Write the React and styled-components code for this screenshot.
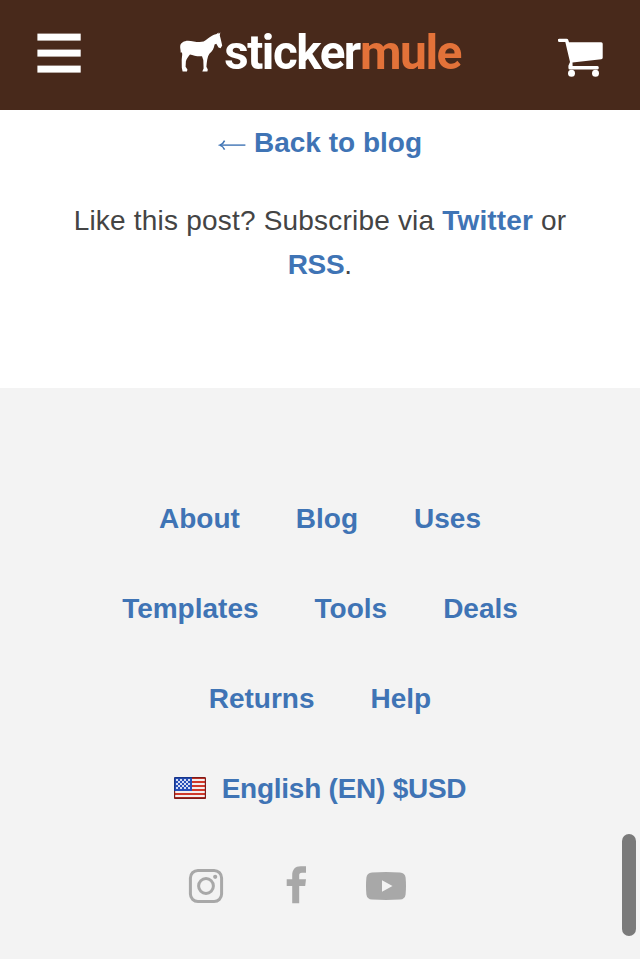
import React from "react";
import styled, { createGlobalStyle } from "styled-components";

const GlobalStyle = createGlobalStyle`
  *, *::before, *::after { box-sizing: border-box; }
  body { margin: 0; background: #fff; }
`;

const Page = styled.div`
  position: relative;
  display: flex;
  flex-direction: column;
  width: 640px;
  height: 959px;
  overflow: hidden;
  font-family: "Liberation Sans", Helvetica, Arial, sans-serif;
  font-size: 28px;
  line-height: 44px;
  color: #444;
`;

const Header = styled.header`
  display: flex;
  align-items: flex-start;
  justify-content: space-between;
  height: 110px;
  padding: 33px 36px 0 37px;
  background: #48291b;
`;

const MenuButton = styled.button`
  display: block;
  padding: 0;
  border: 0;
  background: none;
  line-height: 0;
`;

const LogoLink = styled.a`
  display: block;
  margin: -13px 0 0;
  line-height: 0;
`;

const LogoWord = styled.text`
  font-family: Roboto, sans-serif;
  font-size: 49px;
  font-weight: 700;
  letter-spacing: -1.5px;
  fill: ${({ $accent }) => ($accent ? "#e37239" : "#fff")};
`;

const CartLink = styled.a`
  display: block;
  line-height: 0;
  margin-top: 5px;
`;

const Article = styled.main`
  display: flex;
  flex-direction: column;
  align-items: center;
  height: 278px;
  padding-top: 11px;
  text-align: center;
`;

const TextLink = styled.a`
  color: #3f74b5;
  font-weight: 700;
  text-decoration: none;
  white-space: nowrap;
  letter-spacing: ${({ $spacing = 0 }) => $spacing}px;
`;

const BackLink = styled(TextLink)`
  display: flex;
  align-items: center;
  gap: 8px;
`;

const Subscribe = styled.p`
  margin: 34px 0 0;
  width: 520px;
  letter-spacing: 0.2px;
`;

const Footer = styled.footer`
  flex: 1;
  display: flex;
  flex-direction: column;
  align-items: center;
  padding-top: 109px;
  background: #f3f3f3;
`;

const LinkRow = styled.nav`
  display: flex;
  justify-content: center;
  gap: 56px;
  height: 44px;
  margin-bottom: 46px;
`;

const Locale = styled(TextLink)`
  display: flex;
  align-items: center;
  gap: 16px;
  height: 44px;

  svg { margin-bottom: 2px; }
`;

const SocialRow = styled.div`
  display: flex;
  gap: 50px;
  margin: 55px 48px 0 0;
`;

const SocialLink = styled.a`
  width: 40px;
  height: 40px;
  color: #a8a8a8;
  line-height: 0;
`;

const ScrollThumb = styled.div`
  position: absolute;
  right: 4px;
  top: 834px;
  width: 14px;
  height: 102px;
  border-radius: 7px;
  background: #7a7a7a;
`;

const MenuIcon = () => (
  <svg width="44" height="40" viewBox="0 0 44 40" fill="#fff">
    <rect x="0.4" y="0.6" width="43.3" height="7" />
    <rect x="0.4" y="16.6" width="43.3" height="7" />
    <rect x="0.4" y="32.6" width="43.3" height="7" />
  </svg>
);

const Logo = () => (
  <svg width="284" height="64" viewBox="178 20 284 64">
    <path
      fill="#fff"
      d="M180.2 46C180.6 42.6 184 40.8 188 40.7C193 40.8 198 43 203.6 41.6C206.5 40.4 208.5 37.4 212 35.8C214 34.8 215.6 34.4 217 33.8L218.3 32.4L218.8 34L220.3 32.2L219.8 35.6L220.6 38.6L222.2 45.6L220.6 48.2L218.5 47.6L216.3 43.8L214.6 44.4C213.9 48.5 212.5 51 209.4 53.8C207.2 56.8 206.9 62 206.4 66.8L207.8 69.4L207.4 71.6H202.3L203.6 68.6L203.3 60L202 56.2C197.5 56.8 193 55 190 54.4C188.8 56 186.6 58.4 185.9 61.2L185.6 66.8L187.4 69.6L187 71.4H182.6L181.8 67.8L181.7 60C181.9 56.8 182.5 55.2 182 52.6L180.6 52.6C181 50.6 179.9 48.6 180.2 46Z"
    />
    <LogoWord x="224.2" y="69" textLength="135.6" lengthAdjust="spacingAndGlyphs">sticker</LogoWord>
    <LogoWord $accent x="360" y="69" textLength="101" lengthAdjust="spacingAndGlyphs">mule</LogoWord>
  </svg>
);

const CartIcon = () => (
  <svg width="46" height="40" viewBox="558 38 46 40" fill="#fff">
    <path d="M559.5 38.7H566.5Q568 38.7 568.3 40L569 42.3H601.2Q602.7 42.3 602.7 43.8V57.7Q602.7 59 601.3 59.2L572.5 62.5L572.6 66H597.5Q598.8 66 598.8 67.7T597.5 69.5H570Q568.4 69.5 568.4 68V65.8L570 62L565.3 42H559.5Q557.8 42 557.8 40.3T559.5 38.7Z" />
    <circle cx="571.5" cy="73.2" r="3.5" />
    <circle cx="595.5" cy="73.2" r="3.5" />
  </svg>
);

const BackArrow = () => (
  <svg width="28" height="20" viewBox="0 0 28 20" fill="none" stroke="#3f74b5">
    <path d="M3 12.1H27.4" strokeWidth="1.4" />
    <path d="M6.6 7.6Q5.2 10.9 1.8 12.1Q5.2 13.3 6.6 16.6" strokeWidth="1.5" />
  </svg>
);

const FlagIcon = () => (
  <svg width="32" height="22" viewBox="0 0 32 22">
    <defs>
      <pattern id="stars" width="4" height="4" patternUnits="userSpaceOnUse">
        <rect width="4" height="4" fill="#2850b8" />
        <rect width="2" height="2" fill="#d4dcf2" />
        <rect x="2" y="2" width="2" height="2" fill="#d4dcf2" />
      </pattern>
      <clipPath id="flagShape">
        <rect width="32" height="22" rx="1.5" />
      </clipPath>
    </defs>
    <g clipPath="url(#flagShape)">
      <rect width="32" height="22" fill="#f3eeee" />
      <path d="M0 1H32M0 5H32M0 9H32M0 13H32M0 17H32M0 21H32" stroke="#cf382a" strokeWidth="2" />
      <rect width="18" height="14" fill="#2850b8" />
      <rect x="2" y="2" width="14" height="10" fill="url(#stars)" />
      <path d="M18 .5H32M31.5 0V22M0 21.3H32M.5 14V22" stroke="#7d1b19" strokeWidth="1.4" />
      <path d="M0 .5H18M.5 0V14" stroke="#17368a" strokeWidth="1.4" />
    </g>
  </svg>
);

const InstagramIcon = () => (
  <svg width="40" height="40" viewBox="0 0 40 40" fill="none" stroke="currentColor">
    <rect x="4.4" y="4.4" width="31.2" height="31.2" rx="7.5" strokeWidth="3" />
    <circle cx="20" cy="20" r="7.4" strokeWidth="3" />
    <circle cx="29.2" cy="10.8" r="2.1" fill="currentColor" stroke="none" />
  </svg>
);

const FacebookIcon = () => (
  <svg width="40" height="40" viewBox="0 0 40 40" fill="currentColor">
    <path d="M16.2 37.2V20H10.7V13.3H16.2V9.2C16.2 3.5 19.3 0.2 24.5 0.2H30V6.7H26C23.8 6.7 23.2 7.7 23.2 9.5V13.3H30L29.2 20H23.2V37.2Z" />
  </svg>
);

const YoutubeIcon = () => (
  <svg width="40" height="40" viewBox="0 0 40 40">
    <path
      fill="currentColor"
      fillRule="evenodd"
      d="M6 6.4Q20 5.6 34 6.4Q39 6.8 39.6 11.5Q40.4 20 39.6 28.5Q39 33.2 34 33.6Q20 34.4 6 33.6Q1 33.2 .4 28.5Q-.4 20 .4 11.5Q1 6.8 6 6.4ZM16 14.2V25.8L26.5 20Z"
    />
  </svg>
);

const rows = [
  ["About", "Blog", "Uses"],
  ["Templates", "Tools", "Deals"],
  ["Returns", "Help"],
];

export default function App() {
  return (
    <Page>
      <GlobalStyle />
      <Header>
        <MenuButton aria-label="Menu"><MenuIcon /></MenuButton>
        <LogoLink><Logo /></LogoLink>
        <CartLink aria-label="Cart"><CartIcon /></CartLink>
      </Header>
      <Article>
        <BackLink><BackArrow />Back to blog</BackLink>
        <Subscribe>
          Like this post? Subscribe via <TextLink $spacing={0.15}>Twitter</TextLink> or{" "}
          <TextLink $spacing={-0.3}>RSS</TextLink>.
        </Subscribe>
      </Article>
      <Footer>
        {rows.map((row) => (
          <LinkRow key={row[0]}>
            {row.map((label) => (
              <TextLink key={label}>{label}</TextLink>
            ))}
          </LinkRow>
        ))}
        <Locale $spacing={-0.25}><FlagIcon />English (EN) $USD</Locale>
        <SocialRow>
          <SocialLink aria-label="Instagram"><InstagramIcon /></SocialLink>
          <SocialLink aria-label="Facebook"><FacebookIcon /></SocialLink>
          <SocialLink aria-label="YouTube"><YoutubeIcon /></SocialLink>
        </SocialRow>
      </Footer>
      <ScrollThumb />
    </Page>
  );
}
